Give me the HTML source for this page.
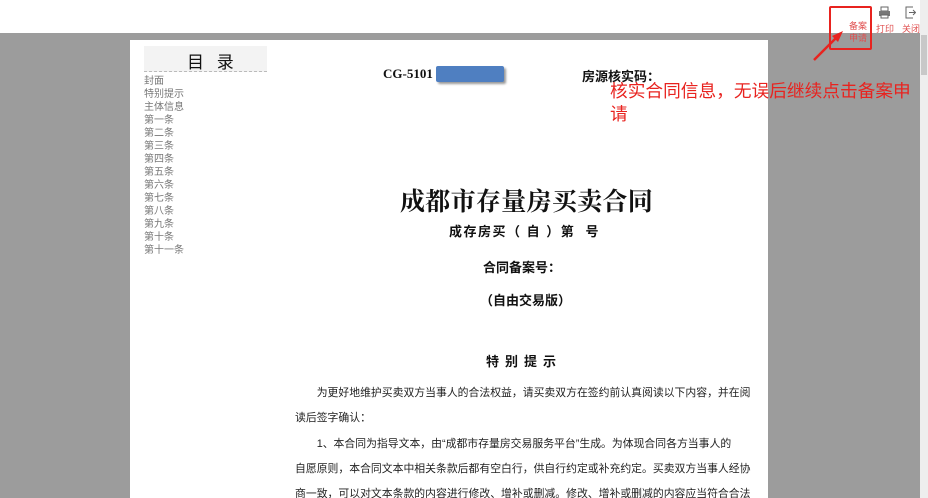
<!DOCTYPE html>
<html style="height:498px;overflow:hidden"><head><meta charset="utf-8"><style>
*{margin:0;padding:0;box-sizing:border-box}
body{width:928px;height:498px;overflow:hidden;background:#fff;font-family:"Liberation Sans","Noto Sans CJK SC",sans-serif;position:relative}
.a{position:absolute;white-space:nowrap}
#gray{position:absolute;left:0;top:33px;width:920px;height:465px;background:#9c9c9c}
#sb{position:absolute;left:920px;top:0;width:8px;height:498px;background:#eee}
#sb div{position:absolute;left:1px;top:35px;width:6px;height:40px;background:#c8c8c8}
#paper{position:absolute;left:130px;top:40px;width:638px;height:458px;background:#fff}
.toc{font-size:10px;color:#777;line-height:13px}
.serif{font-family:"Liberation Serif","Noto Serif CJK SC",serif}
.b{font-weight:bold;font-size:13px;color:#111}
.p{font-size:10.85px;color:#222;line-height:25px}
.red{color:#e8231f}
</style></head><body>
<div id="gray"></div>
<div id="sb"><div></div></div>
<div id="paper"></div>
<div class="a" style="left:144px;top:46px;width:123px;height:26px;background:#f3f3f3;border-bottom:1px dashed #bbb"></div>
<div class="a" style="left:187px;top:48px;font-size:17px;color:#111;letter-spacing:4px">目 录</div>
<div class="a toc" style="left:144px;top:75px">封面<br>特别提示<br>主体信息<br>第一条<br>第二条<br>第三条<br>第四条<br>第五条<br>第六条<br>第七条<br>第八条<br>第九条<br>第十条<br>第十一条</div>
<div class="a serif" style="left:383px;top:66px;font-size:13px;font-weight:bold;color:#111">CG-5101</div>
<div class="a" style="left:436px;top:66px;width:68px;height:16px;background:#4f7fc1;border-radius:2px;box-shadow:2px 2px 2px #999"></div>
<div class="a b" style="left:582px;top:66px">房源核实码：</div>
<div class="a red" style="left:610px;top:80px;font-size:17.7px;line-height:23px">核实合同信息，无误后继续点击备案申<br>请</div>
<div class="a serif" style="left:400px;top:182px;font-size:25px;font-weight:bold;color:#111;letter-spacing:0.3px">成都市存量房买卖合同</div>
<div class="a b" style="left:449px;top:221px;letter-spacing:1.5px">成存房买（ 自 ）第&nbsp; 号</div>
<div class="a b" style="left:483px;top:257px">合同备案号：</div>
<div class="a b" style="left:480px;top:290px">（自由交易版）</div>
<div class="a b" style="left:486px;top:351px;letter-spacing:6px">特别提示</div>
<div class="a p" style="left:295px;top:381px">　　为更好地维护买卖双方当事人的合法权益，请买卖双方在签约前认真阅读以下内容，并在阅<br>读后签字确认：</div>
<div class="a p" style="left:295px;top:432px">　　1、本合同为指导文本，由“成都市存量房交易服务平台”生成。为体现合同各方当事人的<br>自愿原则，本合同文本中相关条款后都有空白行，供自行约定或补充约定。买卖双方当事人经协<br>商一致，可以对文本条款的内容进行修改、增补或删减。修改、增补或删减的内容应当符合合法</div>
<div class="a" style="left:829px;top:6px;width:43px;height:44px;border:2px solid #e8231f;border-radius:2px"></div>
<div class="a" style="left:849px;top:20px;font-size:9px;line-height:12px;color:#e05050">备案<br>申请</div>
<svg class="a" style="left:810px;top:30px" width="40" height="35"><path d="M4 30 L30 4" stroke="#e8231f" stroke-width="2.5"/><path d="M33 1 L22 6 L28 12 Z" fill="#e8231f"/></svg>
<svg class="a" style="left:878px;top:6px" width="13" height="13"><rect x="3" y="1" width="7" height="4" fill="none" stroke="#666"/><rect x="1" y="5" width="11" height="5" fill="#777"/><rect x="3" y="9" width="7" height="3" fill="#fff" stroke="#666"/></svg>
<div class="a" style="left:876px;top:22px;font-size:9px;color:#e05050">打印</div>
<svg class="a" style="left:904px;top:6px" width="12" height="13"><path d="M9 1H2v11h7" fill="none" stroke="#666"/><path d="M5 6.5h6M9 4l2.5 2.5L9 9" fill="none" stroke="#666"/></svg>
<div class="a" style="left:902px;top:22px;font-size:9px;color:#e05050">关闭</div>
</body></html>
